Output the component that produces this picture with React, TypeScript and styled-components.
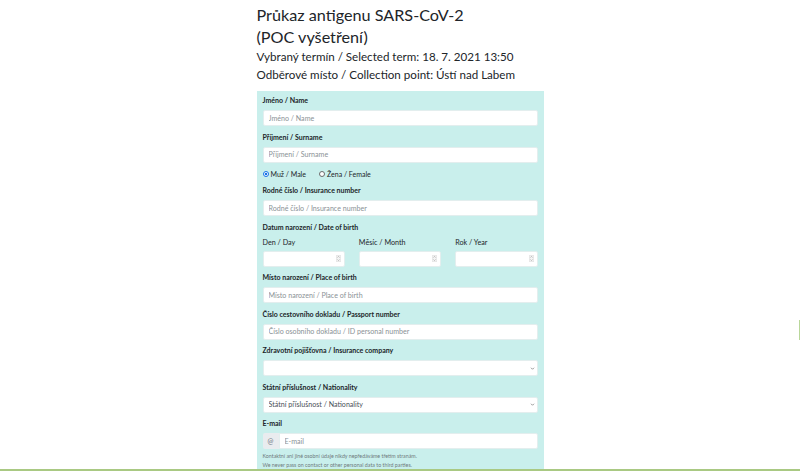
import styled, { createGlobalStyle } from "styled-components";

const GlobalStyle = createGlobalStyle`
  html, body {
    margin: 0;
    padding: 0;
    background: #ffffff;
  }
  body {
    font-family: "Lato", "Open Sans", sans-serif;
    color: #212529;
  }
  * {
    box-sizing: border-box;
  }
`;

const Page = styled.div`
  position: relative;
  height: 471px;
  display: flex;
  flex-direction: column;
  overflow: hidden;
`;

const Main = styled.main`
  flex: 1;
  overflow: hidden;
  display: flex;
  justify-content: center;
`;

const Column = styled.div`
  width: 287px;
  padding-top: 4px;
`;

const Title = styled.h1`
  margin: 0;
  font-size: 16.2px;
  font-weight: 400;
  line-height: 22px;
`;

const Meta = styled.p`
  margin: 0;
  font-size: 11.6px;
  line-height: 18px;
`;

const MetaList = styled.div`
  margin-bottom: 7px;
`;

const Panel = styled.form`
  background: #c9efec;
  padding: 4px 6px 6px 6px;
`;

const Group = styled.div`
  margin-bottom: 5.5px;
`;

const Label = styled.label<{ $light?: boolean }>`
  display: block;
  font-size: ${(p) => (p.$light ? 7.2 : 7)}px;
  line-height: 11px;
  font-weight: ${(p) => (p.$light ? 400 : 700)};
  margin-bottom: ${(p) => (p.$light ? 3 : 4)}px;
`;

const TextInput = styled.input`
  display: block;
  width: 100%;
  min-width: 0;
  height: 16px;
  padding: 0 5px;
  border: 1px solid #e3eeee;
  border-radius: 2px;
  background: #ffffff;
  font-family: inherit;
  font-size: 7.1px;
  color: #495057;
  outline: none;
  &::placeholder {
    color: #8a9296;
  }
`;

const InputGroup = styled.div`
  display: flex;
  height: 16px;
  & > input {
    border-top-left-radius: 0;
    border-bottom-left-radius: 0;
  }
`;

const Prepend = styled.span`
  width: 16px;
  flex: none;
  display: flex;
  align-items: center;
  justify-content: center;
  background: #e9ecef;
  border-radius: 2px 0 0 2px;
  font-size: 7px;
  color: #6c757d;
`;

const SelectWrap = styled.div`
  position: relative;
`;

const Select = styled.select`
  display: block;
  width: 100%;
  height: 16px;
  padding: 0 12px 0 5px;
  border: 1px solid #e3eeee;
  border-radius: 2px;
  background: #ffffff;
  font-family: inherit;
  font-size: 7.1px;
  color: #495057;
  appearance: none;
  outline: none;
`;

const Chevron = styled.svg`
  position: absolute;
  right: 3px;
  top: 5.5px;
  width: 5px;
  height: 5px;
  pointer-events: none;
`;

const RadioRow = styled.div`
  display: flex;
  align-items: center;
  gap: 13px;
  margin: 6px 0 5.5px;
  font-size: 7px;
  line-height: 11px;
`;

const RadioOption = styled.label`
  display: flex;
  align-items: center;
  gap: 2px;
`;

const RadioDot = styled.span<{ $checked?: boolean }>`
  width: 6px;
  height: 6px;
  border-radius: 50%;
  border: 1px solid ${(p) => (p.$checked ? "#1a73e8" : "#6b6b6b")};
  background: ${(p) =>
    p.$checked ? "radial-gradient(circle, #1a73e8 0 1.3px, #ffffff 1.6px)" : "#ffffff"};
`;

const DateGrid = styled.div`
  display: grid;
  grid-template-columns: repeat(3, minmax(0, 1fr));
  column-gap: 14px;
`;

const NumberBox = styled.div`
  display: flex;
  align-items: center;
  height: 16px;
  padding: 0 3px 0 5px;
  border: 1px solid #e3eeee;
  border-radius: 2px;
  background: #ffffff;
`;

const NumberField = styled.input`
  flex: 1;
  width: 0;
  min-width: 0;
  border: none;
  outline: none;
  font-family: inherit;
  font-size: 7.1px;
  background: transparent;
`;

const Help = styled.small`
  display: block;
  margin-top: 3px;
  font-size: 5.3px;
  line-height: 8.5px;
  color: #6f7a7c;
`;

const Footer = styled.div`
  height: 2px;
  flex: none;
  background: #a9c983;
`;

const EdgeMark = styled.div`
  position: absolute;
  right: 0;
  top: 320px;
  width: 1px;
  height: 20px;
  background: #b9d79a;
`;

const Spinner = () => (
  <svg width="5" height="7" viewBox="0 0 5 7">
    <rect x="0.25" y="0.25" width="4.5" height="6.5" rx="0.6" fill="#f4f4f4" stroke="#c9c9c9" strokeWidth="0.4" />
    <path d="M1.3 2.6 L2.5 1.4 L3.7 2.6" fill="none" stroke="#8d8d8d" strokeWidth="0.5" />
    <path d="M1.3 4.4 L2.5 5.6 L3.7 4.4" fill="none" stroke="#8d8d8d" strokeWidth="0.5" />
  </svg>
);

const ChevronDown = () => (
  <Chevron viewBox="0 0 10 10">
    <path d="M2 3.5 L5 6.5 L8 3.5" fill="none" stroke="#555" strokeWidth="1.2" />
  </Chevron>
);

type FieldProps = { label: string; placeholder: string };

const Field = ({ label, placeholder }: FieldProps) => (
  <Group>
    <Label>{label}</Label>
    <TextInput placeholder={placeholder} />
  </Group>
);

const dateParts = ["Den / Day", "Měsíc / Month", "Rok / Year"];

export default function App() {
  return (
    <Page>
      <GlobalStyle />
      <Main>
        <Column>
          <Title>
            Průkaz antigenu SARS-CoV-2
            <br />
            (POC vyšetření)
          </Title>
          <MetaList>
            <Meta>Vybraný termín / Selected term: 18. 7. 2021 13:50</Meta>
            <Meta>Odběrové místo / Collection point: Ústí nad Labem</Meta>
          </MetaList>
          <Panel>
            <Field label="Jméno / Name" placeholder="Jméno / Name" />
            <Label>Příjmení / Surname</Label>
            <TextInput placeholder="Příjmení / Surname" />
            <RadioRow>
              <RadioOption>
                <RadioDot $checked />
                Muž / Male
              </RadioOption>
              <RadioOption>
                <RadioDot />
                Žena / Female
              </RadioOption>
            </RadioRow>
            <Field label="Rodné číslo / Insurance number" placeholder="Rodné číslo / Insurance number" />
            <Group>
              <Label>Datum narození / Date of birth</Label>
              <DateGrid>
                {dateParts.map((part) => (
                  <div key={part}>
                    <Label $light>{part}</Label>
                    <NumberBox>
                      <NumberField />
                      <Spinner />
                    </NumberBox>
                  </div>
                ))}
              </DateGrid>
            </Group>
            <Field label="Místo narození / Place of birth" placeholder="Místo narození / Place of birth" />
            <Field
              label="Číslo cestovního dokladu / Passport number"
              placeholder="Číslo osobního dokladu / ID personal number"
            />
            <Group>
              <Label>Zdravotní pojišťovna / Insurance company</Label>
              <SelectWrap>
                <Select defaultValue="">
                  <option value=""></option>
                </Select>
                <ChevronDown />
              </SelectWrap>
            </Group>
            <Group>
              <Label>Státní příslušnost / Nationality</Label>
              <SelectWrap>
                <Select defaultValue="">
                  <option value="">Státní příslušnost / Nationality</option>
                </Select>
                <ChevronDown />
              </SelectWrap>
            </Group>
            <Group>
              <Label>E-mail</Label>
              <InputGroup>
                <Prepend>@</Prepend>
                <TextInput placeholder="E-mail" />
              </InputGroup>
              <Help>
                Kontaktní ani jiné osobní údaje nikdy nepředáváme třetím stranám.
                <br />
                We never pass on contact or other personal data to third parties.
              </Help>
            </Group>
          </Panel>
        </Column>
      </Main>
      <Footer />
      <EdgeMark />
    </Page>
  );
}
